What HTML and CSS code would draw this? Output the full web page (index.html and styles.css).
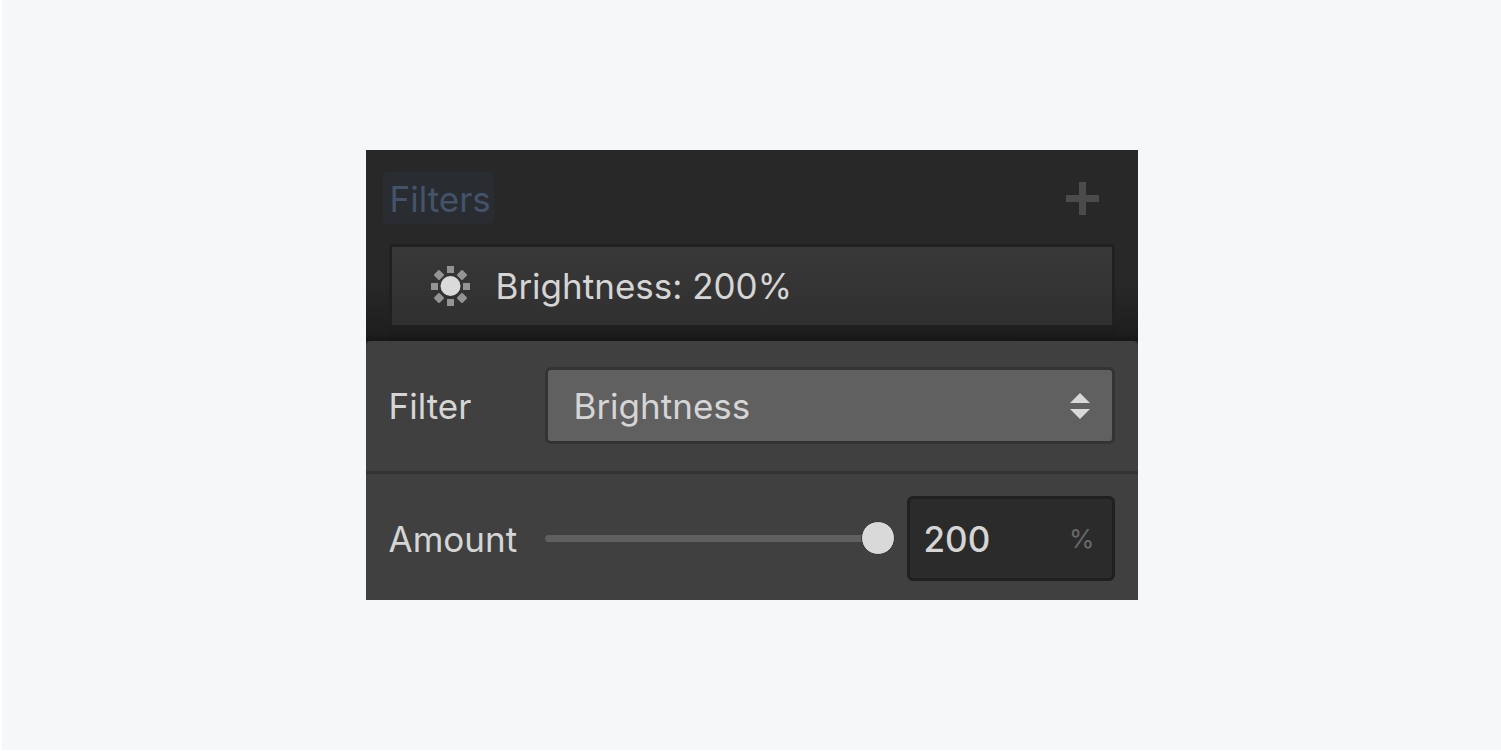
FILE: index.html
```html
<!DOCTYPE html>
<html lang="en">
<head>
<meta charset="utf-8">
<meta name="viewport" content="width=device-width, initial-scale=1">
<title>Filters</title>
<link rel="stylesheet" href="styles.css">
</head>
<body>
<main class="stage">
  <section class="panel" aria-labelledby="filters-title">
    <div class="filters">
      <header class="filters-header">
        <h1 class="chip" id="filters-title">Filters</h1>
        <button class="add" type="button" aria-label="Add filter">
          <svg width="33" height="33" viewBox="0 0 33 33" aria-hidden="true"><path d="M13 0h7v13h13v7H20v13h-7V20H0v-7h13z" fill="currentColor"/></svg>
        </button>
      </header>
      <div class="list">
        <button class="item" type="button">
          <svg width="40" height="40" viewBox="0 0 40 40" aria-hidden="true">
            <g fill="#949494">
              <path d="M17 0h7v7h-7zM17 33h7v7h-7zM1 17h7v7H1zM33 17h7v7h-7z"/>
              <path d="M9 5l4 4-4 4-4-4zM32 5l4 4-4 4-4-4zM9 28l4 4-4 4-4-4zM32 28l4 4-4 4-4-4z" stroke="#949494" stroke-width="2" stroke-linejoin="round"/>
            </g>
            <circle cx="20.500" cy="20" r="10" fill="#dadada"/>
          </svg>
          <span>Brightness: 200%</span>
        </button>
      </div>
    </div>
    <form class="editor">
      <div class="row row-filter">
        <label class="label" for="filter">Filter</label>
        <div class="select-box">
          <select class="select" id="filter"><option>Brightness</option></select>
          <svg class="arrows" width="20" height="26" viewBox="0 0 20 26" aria-hidden="true"><path d="M10 0l10 10H0zM0 16h20L10 26z" fill="#d9d9d9"/></svg>
        </div>
      </div>
      <div class="row row-amount">
        <label class="label" for="amount">Amount</label>
        <input class="slider" id="amount" type="range" min="0" max="200" value="200">
        <div class="number">
          <input class="number-input" type="text" inputmode="numeric" value="200" aria-label="Amount value">
          <span class="unit">%</span>
        </div>
      </div>
    </form>
  </section>
</main>
</body>
</html>
```
FILE: styles.css
```css
* {
  box-sizing: border-box;
}

body {
  margin: 0;
  font-family: Inter, "Liberation Sans", sans-serif;
  font-size: 35px;
  line-height: 44px;
  color: #d5d5d5;
}

button,
input,
select {
  font: inherit;
  color: inherit;
  margin: 0;
}

.stage {
  min-height: 100vh;
  display: flex;
  align-items: center;
  justify-content: center;
  background: #f6f7f9;
  border-left: 2px solid #fff;
  border-bottom: 1px solid #fff;
}

.panel {
  width: 100%;
  max-width: 772px;
  background: #282828;
}

.filters {
  padding-top: 22px;
  background: linear-gradient(to bottom, transparent 70%, #1e1e1e 96%, #161616);
}

.filters-header {
  display: flex;
  align-items: center;
  justify-content: space-between;
  padding: 0 39px 20px 17px;
}

.chip {
  margin: 0;
  padding: 5px 3px 3px 7px;
  border-radius: 5px;
  background: #292c31;
  color: #43546a;
  font-size: 35px;
  font-weight: 400;
}

.add {
  display: flex;
  padding: 0;
  border: 0;
  background: none;
  color: #4b4b4b;
}

.list {
  margin: 0 23px;
  padding: 3px 3px 16px;
  border-radius: 4px 4px 0 0;
  background: linear-gradient(to bottom, #202020 80%, #1e1e1e 90%, #151515);
}

.item {
  display: flex;
  align-items: center;
  gap: 26px;
  width: 100%;
  padding: 17px 38px;
  border: 0;
  background: linear-gradient(to bottom, #383838, #303030);
  text-align: left;
}

.editor {
  background: #404040;
  border-radius: 5px 5px 0 0;
}

.row {
  display: flex;
  align-items: center;
}

.row-filter {
  padding: 26px 23px 27px;
  border-bottom: 3px solid #333;
}

.row-amount {
  padding: 22px 23px 19px;
}

.label {
  flex: 0 0 156px;
  padding-top: 1px;
}

.select-box {
  flex: 1;
  display: grid;
  align-items: center;
}

.select {
  grid-area: 1 / 1;
  appearance: none;
  width: 100%;
  height: 77px;
  padding: 1px 60px 0 26px;
  border: 3px solid #333;
  border-radius: 6px;
  background: #606060;
}

.arrows {
  grid-area: 1 / 1;
  justify-self: end;
  margin-right: 25px;
  pointer-events: none;
}

.slider {
  flex: 1;
  min-width: 0;
  height: 36px;
  appearance: none;
  background: none;
}

.slider::-webkit-slider-runnable-track {
  height: 7px;
  border-radius: 4px;
  background: #606060;
}

.slider::-webkit-slider-thumb {
  appearance: none;
  width: 34px;
  height: 34px;
  margin-top: -14px;
  border: 1px solid #333;
  border-radius: 50%;
  background: #d9d9d9;
}

.number {
  display: flex;
  align-items: center;
  flex: 0 0 208px;
  min-width: 0;
  height: 85px;
  margin-left: 12px;
  padding: 0 17px 0 14px;
  border: 3px solid #202020;
  border-radius: 6px;
  background: #2b2b2b;
}

.number-input {
  flex: 1;
  width: 100%;
  min-width: 0;
  padding: 1px 0 0;
  border: 0;
  background: none;
  font-weight: 500;
}

.unit {
  color: #696969;
  font-size: 26px;
}
```
